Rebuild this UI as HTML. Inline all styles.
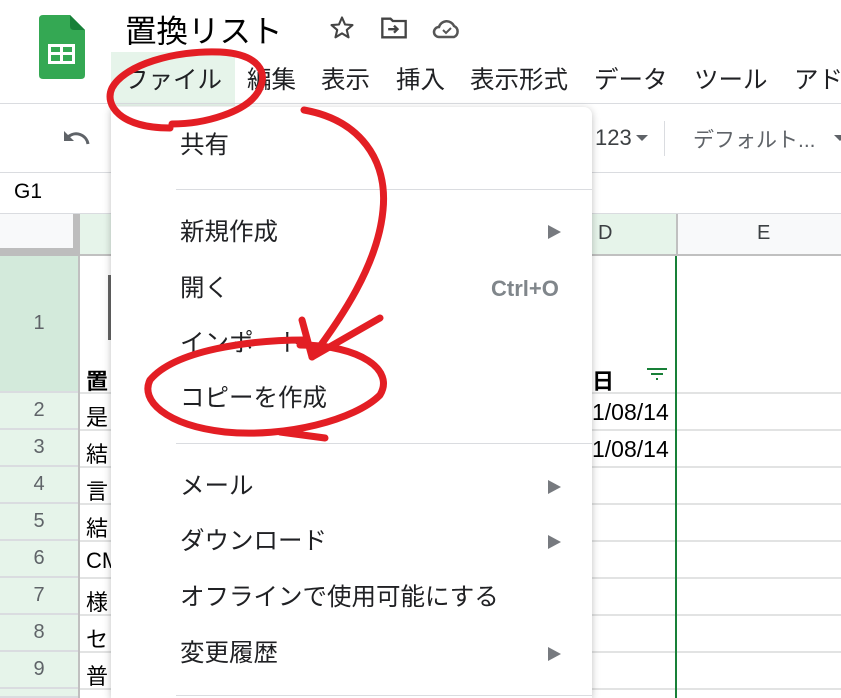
<!DOCTYPE html>
<html><head><meta charset="utf-8"><style>
*{margin:0;padding:0;box-sizing:border-box}
html,body{width:841px;height:698px;overflow:hidden}
body{background:#fff;position:relative;font-family:"Liberation Sans","Noto Sans CJK JP",sans-serif;color:#202124}
.a{position:absolute;white-space:nowrap}
.m{font-size:24.5px;color:#202124}
.mi{position:absolute;left:180px;font-size:24.5px;line-height:30px}
.arr{position:absolute;left:548px;width:0;height:0;border-top:7px solid transparent;border-bottom:7px solid transparent;border-left:13px solid #5f6368;opacity:.85}
.sep{position:absolute;left:176px;width:416px;height:1px;background:#dadce0}
.rh{position:absolute;left:0;width:78px;background:#e6f4ea;border-bottom:2px solid #dadce0;text-align:center;color:#5f6368;font-size:20px}
.hl{position:absolute;left:80px;width:761px;height:2px;background:#e2e3e3}
.c{position:absolute;left:86px;font-size:22px;color:#000}
</style></head><body>
<svg class="a" style="left:39px;top:15px" width="46" height="64" viewBox="0 0 46 64">
<path d="M4 0H31L46 15V60Q46 64 42 64H4Q0 64 0 60V4Q0 0 4 0Z" fill="#34a853"/>
<path d="M31 0L46 15H35Q31 15 31 11Z" fill="#188038"/>
<rect x="9" y="29" width="27" height="20" fill="#fff"/>
<rect x="12" y="32" width="9" height="5" fill="#34a853"/><rect x="24" y="32" width="9" height="5" fill="#34a853"/>
<rect x="12" y="40" width="9" height="6" fill="#34a853"/><rect x="24" y="40" width="9" height="6" fill="#34a853"/>
</svg>
<div class="a" style="left:125px;top:6px;font-size:31.5px;color:#000">置換リスト</div>
<svg class="a" style="left:328px;top:14px" width="28" height="28" viewBox="0 0 24 24"><path d="M12 3l2.6 6 6.4.5-4.9 4.2 1.5 6.3L12 16.6 6.4 20l1.5-6.3L3 9.5l6.4-.5z" fill="none" stroke="#444" stroke-width="1.8" stroke-linejoin="round"/></svg>
<svg class="a" style="left:380px;top:15px" width="28" height="26" viewBox="0 0 24 22"><path d="M2 3h7l2 2h11v14H2z" fill="none" stroke="#444" stroke-width="2"/><path d="M7 12h8M12 9l3 3-3 3" fill="none" stroke="#444" stroke-width="2"/></svg>
<svg class="a" style="left:432px;top:18px" width="30" height="22" viewBox="0 0 30 22"><path d="M8 19H7a5 5 0 0 1 0-10 8 8 0 0 1 15-1 6 6 0 0 1 0 11z" fill="none" stroke="#555" stroke-width="2.5"/><path d="M11 12l3 3 5-5" fill="none" stroke="#555" stroke-width="2"/></svg>
<div class="a" style="left:111px;top:52px;width:124px;height:54px;background:#e6f4ea"></div>
<div class="a" style="left:0;top:55px;width:841px;height:45px;overflow:hidden">
<div class="a m" style="left:124px;top:6px">ファイル</div>
<div class="a m" style="left:247px;top:6px">編集</div>
<div class="a m" style="left:321px;top:6px">表示</div>
<div class="a m" style="left:396px;top:6px">挿入</div>
<div class="a m" style="left:470px;top:6px">表示形式</div>
<div class="a m" style="left:594px;top:6px">データ</div>
<div class="a m" style="left:694px;top:6px">ツール</div>
<div class="a m" style="left:794px;top:6px">アドオン</div>
</div>
<div class="a" style="left:0;top:103px;width:841px;height:1px;background:#dadce0"></div>
<svg class="a" style="left:61px;top:128px" width="30" height="20" viewBox="0 0 30 20"><path d="M27 16A12 12 0 0 0 7 9" fill="none" stroke="#5f6368" stroke-width="3"/><path d="M3 3v10h10z" fill="#5f6368"/></svg>
<div class="a" style="left:595px;top:125px;font-size:22px;color:#3c4043">123</div>
<div class="a" style="left:636px;top:135px;border-left:6px solid transparent;border-right:6px solid transparent;border-top:6px solid #5f6368"></div>
<div class="a" style="left:664px;top:121px;width:1px;height:35px;background:#dadce0"></div>
<div class="a" style="left:693px;top:124px;font-size:21px;color:#5f6368">デフォルト...</div>
<div class="a" style="left:834px;top:135px;width:7px;height:6px;overflow:hidden"><div style="border-left:6px solid transparent;border-right:6px solid transparent;border-top:6px solid #5f6368;width:0"></div></div>
<div class="a" style="left:0;top:172px;width:841px;height:1px;background:#dadce0"></div>
<div class="a" style="left:14px;top:180px;font-size:21px;color:#000">G1</div>
<div class="a" style="left:0;top:213px;width:841px;height:1px;background:#dadce0"></div>
<div class="a" style="left:0;top:214px;width:80px;height:42px;background:#bdbdbd"></div>
<div class="a" style="left:0;top:214px;width:73px;height:34px;background:#f8f9fa"></div>
<div class="a" style="left:80px;top:214px;width:596px;height:42px;background:#e6f4ea;border-bottom:2px solid #c0c0c0"></div>
<div class="a" style="left:676px;top:214px;width:165px;height:42px;background:#f8f9fa;border-left:2px solid #c0c0c0;border-bottom:2px solid #c0c0c0"></div>
<div class="a" style="left:598px;top:222px;font-size:20px;color:#3c4043">D</div>
<div class="a" style="left:757px;top:222px;font-size:20px;color:#3c4043">E</div>
<div class="rh" style="top:256px;height:137px;line-height:135px;background:#d3eadb">1</div>
<div class="rh" style="top:393px;height:37px;line-height:35px">2</div>
<div class="rh" style="top:430px;height:37px;line-height:35px">3</div>
<div class="rh" style="top:467px;height:37px;line-height:35px">4</div>
<div class="rh" style="top:504px;height:37px;line-height:35px">5</div>
<div class="rh" style="top:541px;height:37px;line-height:35px">6</div>
<div class="rh" style="top:578px;height:37px;line-height:35px">7</div>
<div class="rh" style="top:615px;height:37px;line-height:35px">8</div>
<div class="rh" style="top:652px;height:37px;line-height:35px">9</div>
<div class="rh" style="top:689px;height:9px"></div>
<div class="a" style="left:78px;top:256px;width:2px;height:442px;background:#c0c0c0"></div>
<div class="hl" style="top:392px"></div><div class="hl" style="top:429px"></div><div class="hl" style="top:466px"></div><div class="hl" style="top:503px"></div><div class="hl" style="top:540px"></div><div class="hl" style="top:577px"></div><div class="hl" style="top:614px"></div><div class="hl" style="top:651px"></div><div class="hl" style="top:688px"></div>
<div class="a" style="left:675px;top:256px;width:2px;height:442px;background:#188038"></div>
<div class="a" style="left:108px;top:275px;width:4px;height:65px;background:#666"></div>
<div class="c" style="top:364px;font-weight:bold">置</div>
<div class="c" style="top:400px">是</div><div class="c" style="top:437px">結</div><div class="c" style="top:474px">言</div><div class="c" style="top:511px">結</div><div class="c" style="top:548px">CM</div><div class="c" style="top:585px">様</div><div class="c" style="top:622px">セ</div><div class="c" style="top:659px">普</div>
<div class="a" style="left:592px;top:364px;font-size:22px;font-weight:bold;color:#000">日</div>
<svg class="a" style="left:646px;top:368px" width="22" height="14"><path d="M1 1h20M5 6h12M10 11h2" stroke="#188038" stroke-width="2"/></svg>
<div class="a" style="left:592px;top:399px;font-size:23px;color:#000">1/08/14</div>
<div class="a" style="left:592px;top:436px;font-size:23px;color:#000">1/08/14</div>
<div class="a" style="left:111px;top:107px;width:481px;height:591px;background:#fff;border-radius:0 8px 0 0;box-shadow:0 2px 8px rgba(0,0,0,.25)"></div>
<div class="mi" style="top:131px">共有</div>
<div class="sep" style="top:189px"></div>
<div class="mi" style="top:218px">新規作成</div><div class="arr" style="top:225px"></div>
<div class="mi" style="top:274px">開く</div>
<div class="a" style="left:491px;top:276px;font-size:22px;color:#80868b;font-weight:bold">Ctrl+O</div>
<div class="mi" style="top:329px">インポート</div>
<div class="mi" style="top:384px">コピーを作成</div>
<div class="sep" style="top:443px"></div>
<div class="mi" style="top:472px">メール</div><div class="arr" style="top:480px"></div>
<div class="mi" style="top:527px">ダウンロード</div><div class="arr" style="top:535px"></div>
<div class="mi" style="top:583px">オフラインで使用可能にする</div>
<div class="mi" style="top:639px">変更履歴</div><div class="arr" style="top:647px"></div>
<div class="sep" style="top:695px"></div>
<svg class="a" style="left:0;top:0" width="841" height="698" viewBox="0 0 841 698">
<g fill="none" stroke="#e31e24" stroke-width="7" stroke-linecap="round" stroke-linejoin="round">
<path d="M170 128C120 128 104 105 112 88C124 65 175 50 220 52C258 54 270 72 258 92C246 112 205 124 172 124"/>
<path d="M304 110C360 120 388 160 383 210C378 265 340 320 312 357"/>
<path d="M302 320L312 357L380 318"/>
<path d="M305 340C250 340 175 350 150 380C140 400 165 425 225 432C285 438 355 420 380 395C395 370 360 345 300 345"/>
<path d="M280 432L325 438"/>
</g>
</svg>
</body></html>
